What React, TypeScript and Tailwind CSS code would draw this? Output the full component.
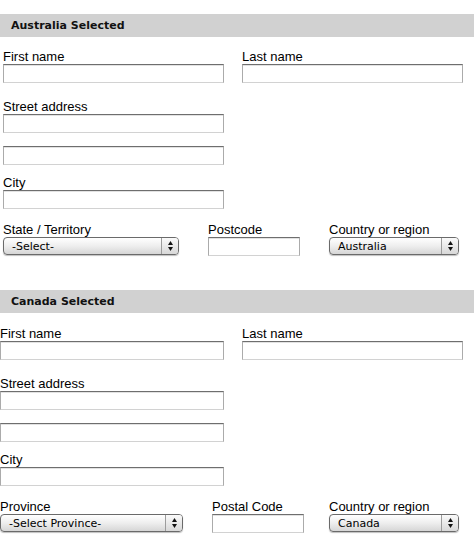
import React from "react";

const labelCls =
  "block h-[14px] leading-[14px] text-[13px] text-black font-['Liberation_Sans',Arial,sans-serif] whitespace-nowrap";

const inputCls =
  "block h-[19px] bg-white border border-t-[#6e6e6e] border-x-[#ababab] border-b-[#d2d2d2] shadow-[inset_0_1px_0_#e2e2e2] outline-none";

function TextField({ label, width }: { label?: string; width: string }) {
  return (
    <div>
      {label && <span className={labelCls}>{label}</span>}
      <input type="text" className={`${inputCls} ${width}`} />
    </div>
  );
}

function PopupSelect({ value, width }: { value: string; width: string }) {
  return (
    <div
      className={`${width} h-[18px] flex rounded-[4px] border border-[#6a6a6a] overflow-hidden shadow-[0_1px_1px_rgba(0,0,0,0.25)] bg-linear-to-b from-white via-[#eeeeee] to-[#d6d6d6]`}
    >
      <span className="flex-1 pl-[8px] leading-[17px] text-[11px] text-black font-['DejaVu_Sans',Verdana,sans-serif] whitespace-nowrap">
        {value}
      </span>
      <div className="w-[17px] border-l border-[#9c9c9c] flex flex-col items-center justify-center gap-[2px] bg-linear-to-b from-[#fafafa] to-[#d8d8d8]">
        <svg width="5" height="4" viewBox="0 0 5 4">
          <path d="M2.5 0L5 4H0Z" fill="#111" />
        </svg>
        <svg width="5" height="4" viewBox="0 0 5 4">
          <path d="M0 0H5L2.5 4Z" fill="#111" />
        </svg>
      </div>
    </div>
  );
}

interface SectionProps {
  title: string;
  canada?: boolean;
}

function AddressSection({ title, canada }: SectionProps) {
  const left = canada ? "w-[224px]" : "w-[221px]";
  return (
    <div>
      {/* Section header */}
      <div className="h-[23px] bg-[#d1d1d1] pl-[11px] pt-[2px] flex items-center">
        <span className="text-[11px] font-bold text-[#111] font-['DejaVu_Sans',Verdana,sans-serif]">
          {title}
        </span>
      </div>

      <div className={canada ? "pt-[14px]" : "pt-[13px] pl-[3px]"}>
        {/* Names */}
        <div className="flex">
          <div className={canada ? "w-[242px]" : "w-[239px]"}>
            <TextField label="First name" width={left} />
          </div>
          <TextField label="Last name" width="w-[221px]" />
        </div>

        {/* Street */}
        <div className="mt-[17px]">
          <TextField label="Street address" width={left} />
        </div>
        <div className="mt-[13px]">
          <TextField width={left} />
        </div>

        {/* City */}
        <div className="mt-[11px]">
          <TextField label="City" width={left} />
        </div>

        {/* Region / code / country */}
        <div className="mt-[14px] flex">
          <div>
            <span className={labelCls}>
              {canada ? "Province" : "State / Territory"}
            </span>
            <PopupSelect
              value={canada ? "-Select Province-" : "-Select-"}
              width={canada ? "w-[183px]" : "w-[176px]"}
            />
          </div>
          <div className="ml-[29px]">
            <TextField
              label={canada ? "Postal Code" : "Postcode"}
              width="w-[92px]"
            />
          </div>
          <div className={canada ? "ml-[25px]" : "ml-[29px]"}>
            <span className={labelCls}>Country or region</span>
            <PopupSelect
              value={canada ? "Canada" : "Australia"}
              width="w-[130px]"
            />
          </div>
        </div>
      </div>
    </div>
  );
}

export default function App() {
  return (
    <div className="w-[474px] h-[556px] bg-white pt-[14px] overflow-hidden">
      <AddressSection title="Australia Selected" />
      <div className="h-[34px]" />
      <AddressSection title="Canada Selected" canada />
    </div>
  );
}
